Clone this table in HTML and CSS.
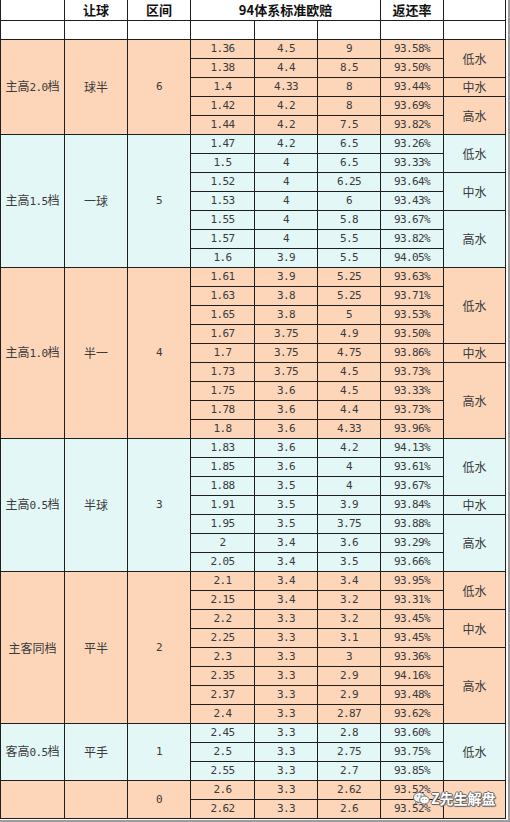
FILE: index.html
```html
<!DOCTYPE html>
<html lang="zh-CN">
<head>
<meta charset="utf-8">
<title>94体系标准欧赔</title>
<link rel="stylesheet" href="styles.css">
</head>
<body>
<div class="frame">
<table class="odds">
<colgroup>
<col class="c64"><col class="c63"><col class="c63"><col class="c64"><col class="c63"><col class="c63"><col class="c63"><col class="c62">
</colgroup>
<thead>
<tr class="head">
<th></th><th>让球</th><th>区间</th><th colspan="3">94体系标准欧赔</th><th>返还率</th><th></th>
</tr>
<tr class="blank">
<td></td><td></td><td></td><td></td><td></td><td></td><td></td><td></td>
</tr>
</thead>
<tbody class="peach">
<tr><td rowspan="5" class="cn">主高<span class="a">2.0</span>档</td><td rowspan="5" class="cn">球半</td><td rowspan="5" class="n">6</td><td class="n">1.36</td><td class="n">4.5</td><td class="n">9</td><td class="n">93.58%</td><td rowspan="2" class="cn">低水</td></tr>
<tr><td class="n">1.38</td><td class="n">4.4</td><td class="n">8.5</td><td class="n">93.50%</td></tr>
<tr><td class="n">1.4</td><td class="n">4.33</td><td class="n">8</td><td class="n">93.44%</td><td class="cn">中水</td></tr>
<tr><td class="n">1.42</td><td class="n">4.2</td><td class="n">8</td><td class="n">93.69%</td><td rowspan="2" class="cn">高水</td></tr>
<tr><td class="n">1.44</td><td class="n">4.2</td><td class="n">7.5</td><td class="n">93.82%</td></tr>
</tbody>
<tbody class="cyan">
<tr><td rowspan="7" class="cn">主高<span class="a">1.5</span>档</td><td rowspan="7" class="cn">一球</td><td rowspan="7" class="n">5</td><td class="n">1.47</td><td class="n">4.2</td><td class="n">6.5</td><td class="n">93.26%</td><td rowspan="2" class="cn">低水</td></tr>
<tr><td class="n">1.5</td><td class="n">4</td><td class="n">6.5</td><td class="n">93.33%</td></tr>
<tr><td class="n">1.52</td><td class="n">4</td><td class="n">6.25</td><td class="n">93.64%</td><td rowspan="2" class="cn">中水</td></tr>
<tr><td class="n">1.53</td><td class="n">4</td><td class="n">6</td><td class="n">93.43%</td></tr>
<tr><td class="n">1.55</td><td class="n">4</td><td class="n">5.8</td><td class="n">93.67%</td><td rowspan="3" class="cn">高水</td></tr>
<tr><td class="n">1.57</td><td class="n">4</td><td class="n">5.5</td><td class="n">93.82%</td></tr>
<tr><td class="n">1.6</td><td class="n">3.9</td><td class="n">5.5</td><td class="n">94.05%</td></tr>
</tbody>
<tbody class="peach">
<tr><td rowspan="9" class="cn">主高<span class="a">1.0</span>档</td><td rowspan="9" class="cn">半一</td><td rowspan="9" class="n">4</td><td class="n">1.61</td><td class="n">3.9</td><td class="n">5.25</td><td class="n">93.63%</td><td rowspan="4" class="cn">低水</td></tr>
<tr><td class="n">1.63</td><td class="n">3.8</td><td class="n">5.25</td><td class="n">93.71%</td></tr>
<tr><td class="n">1.65</td><td class="n">3.8</td><td class="n">5</td><td class="n">93.53%</td></tr>
<tr><td class="n">1.67</td><td class="n">3.75</td><td class="n">4.9</td><td class="n">93.50%</td></tr>
<tr><td class="n">1.7</td><td class="n">3.75</td><td class="n">4.75</td><td class="n">93.86%</td><td class="cn">中水</td></tr>
<tr><td class="n">1.73</td><td class="n">3.75</td><td class="n">4.5</td><td class="n">93.73%</td><td rowspan="4" class="cn">高水</td></tr>
<tr><td class="n">1.75</td><td class="n">3.6</td><td class="n">4.5</td><td class="n">93.33%</td></tr>
<tr><td class="n">1.78</td><td class="n">3.6</td><td class="n">4.4</td><td class="n">93.73%</td></tr>
<tr><td class="n">1.8</td><td class="n">3.6</td><td class="n">4.33</td><td class="n">93.96%</td></tr>
</tbody>
<tbody class="cyan">
<tr><td rowspan="7" class="cn">主高<span class="a">0.5</span>档</td><td rowspan="7" class="cn">半球</td><td rowspan="7" class="n">3</td><td class="n">1.83</td><td class="n">3.6</td><td class="n">4.2</td><td class="n">94.13%</td><td rowspan="3" class="cn">低水</td></tr>
<tr><td class="n">1.85</td><td class="n">3.6</td><td class="n">4</td><td class="n">93.61%</td></tr>
<tr><td class="n">1.88</td><td class="n">3.5</td><td class="n">4</td><td class="n">93.67%</td></tr>
<tr><td class="n">1.91</td><td class="n">3.5</td><td class="n">3.9</td><td class="n">93.84%</td><td class="cn">中水</td></tr>
<tr><td class="n">1.95</td><td class="n">3.5</td><td class="n">3.75</td><td class="n">93.88%</td><td rowspan="3" class="cn">高水</td></tr>
<tr><td class="n">2</td><td class="n">3.4</td><td class="n">3.6</td><td class="n">93.29%</td></tr>
<tr><td class="n">2.05</td><td class="n">3.4</td><td class="n">3.5</td><td class="n">93.66%</td></tr>
</tbody>
<tbody class="peach">
<tr><td rowspan="8" class="cn">主客同档</td><td rowspan="8" class="cn">平半</td><td rowspan="8" class="n">2</td><td class="n">2.1</td><td class="n">3.4</td><td class="n">3.4</td><td class="n">93.95%</td><td rowspan="2" class="cn">低水</td></tr>
<tr><td class="n">2.15</td><td class="n">3.4</td><td class="n">3.2</td><td class="n">93.31%</td></tr>
<tr><td class="n">2.2</td><td class="n">3.3</td><td class="n">3.2</td><td class="n">93.45%</td><td rowspan="2" class="cn">中水</td></tr>
<tr><td class="n">2.25</td><td class="n">3.3</td><td class="n">3.1</td><td class="n">93.45%</td></tr>
<tr><td class="n">2.3</td><td class="n">3.3</td><td class="n">3</td><td class="n">93.36%</td><td rowspan="4" class="cn">高水</td></tr>
<tr><td class="n">2.35</td><td class="n">3.3</td><td class="n">2.9</td><td class="n">94.16%</td></tr>
<tr><td class="n">2.37</td><td class="n">3.3</td><td class="n">2.9</td><td class="n">93.48%</td></tr>
<tr><td class="n">2.4</td><td class="n">3.3</td><td class="n">2.87</td><td class="n">93.62%</td></tr>
</tbody>
<tbody class="cyan">
<tr><td rowspan="3" class="cn">客高<span class="a">0.5</span>档</td><td rowspan="3" class="cn">平手</td><td rowspan="3" class="n">1</td><td class="n">2.45</td><td class="n">3.3</td><td class="n">2.8</td><td class="n">93.60%</td><td rowspan="3" class="cn">低水</td></tr>
<tr><td class="n">2.5</td><td class="n">3.3</td><td class="n">2.75</td><td class="n">93.75%</td></tr>
<tr><td class="n">2.55</td><td class="n">3.3</td><td class="n">2.7</td><td class="n">93.85%</td></tr>
</tbody>
<tbody class="peach">
<tr><td rowspan="2"></td><td rowspan="2"></td><td rowspan="2" class="n">0</td><td class="n">2.6</td><td class="n">3.3</td><td class="n">2.62</td><td class="n">93.52%</td><td rowspan="2"></td></tr>
<tr><td class="n">2.62</td><td class="n">3.3</td><td class="n">2.6</td><td class="n">93.52%</td></tr>
</tbody>
</table>
<div class="mark">
<svg class="mark-icon" width="17" height="13" viewBox="0 0 17 13">
<ellipse cx="6.5" cy="5.5" rx="6" ry="5" fill="#f2f2f2" stroke="#6f6f6f" stroke-width="1"/>
<path d="M3 9.5 L2 12 L5.5 10.3 Z" fill="#f2f2f2" stroke="#6f6f6f" stroke-width="0.8"/>
<ellipse cx="11.5" cy="8" rx="4.8" ry="4" fill="#ffffff" stroke="#6f6f6f" stroke-width="1"/>
<circle cx="4.5" cy="4" r="0.8" fill="#6f6f6f"/>
<circle cx="8" cy="4" r="0.8" fill="#6f6f6f"/>
<circle cx="10" cy="7.5" r="0.6" fill="#6f6f6f"/>
<circle cx="13" cy="7.5" r="0.6" fill="#6f6f6f"/>
</svg>
<span class="mark-text">Z先生解盘</span>
</div>
</div>
</body>
</html>
```
FILE: styles.css
```css
body {
  margin: 0;
  background: #ffffff;
}

.frame {
  position: relative;
  display: inline-block;
  vertical-align: top;
  padding: 0 2px 1px 0;
  border-right: 2px solid #9c9c9c;
  border-bottom: 2px solid #9c9c9c;
}

.odds {
  border-collapse: separate;
  border-spacing: 0;
  table-layout: fixed;
  width: 506px;
  border-left: 1px solid #1e1e1e;
}

.c64 { width: 64px; }
.c63 { width: 63px; }
.c62 { width: 62px; }

.odds th,
.odds td {
  box-sizing: border-box;
  padding: 0;
  border-right: 1px solid #1e1e1e;
  border-bottom: 1px solid #1e1e1e;
  text-align: center;
  vertical-align: middle;
  height: 19px;
  line-height: 16px;
  color: #3a3a3a;
  white-space: nowrap;
  overflow: hidden;
}

.head th {
  height: 21px;
  font-family: "Noto Sans CJK SC", "Noto Sans", sans-serif;
  font-size: 13px;
  font-weight: bold;
  color: #111111;
}

.blank td {
  background: #ffffff;
}

.peach td {
  background: #fdd6ba;
}

.cyan td {
  background: #e3f7f7;
}

.cn {
  font-family: "Noto Sans CJK SC", "Noto Sans", sans-serif;
  font-size: 12px;
}

.a,
.n {
  font-family: "DejaVu Sans Mono", "Liberation Mono", monospace;
  font-size: 11px;
  letter-spacing: -0.6px;
}

.mark {
  position: absolute;
  left: 413px;
  top: 790px;
  display: flex;
  align-items: center;
  gap: 1px;
}

.mark-icon {
  display: block;
}

.mark-text {
  font-family: "Noto Sans CJK SC", "Noto Sans", sans-serif;
  font-size: 14px;
  font-weight: bold;
  line-height: 17px;
  color: #ffffff;
  text-shadow: 1px 0 0 #6a6a6a, -1px 0 0 #6a6a6a, 0 1px 0 #6a6a6a, 0 -1px 0 #6a6a6a, 1px 1px 1px #555555;
}
```
